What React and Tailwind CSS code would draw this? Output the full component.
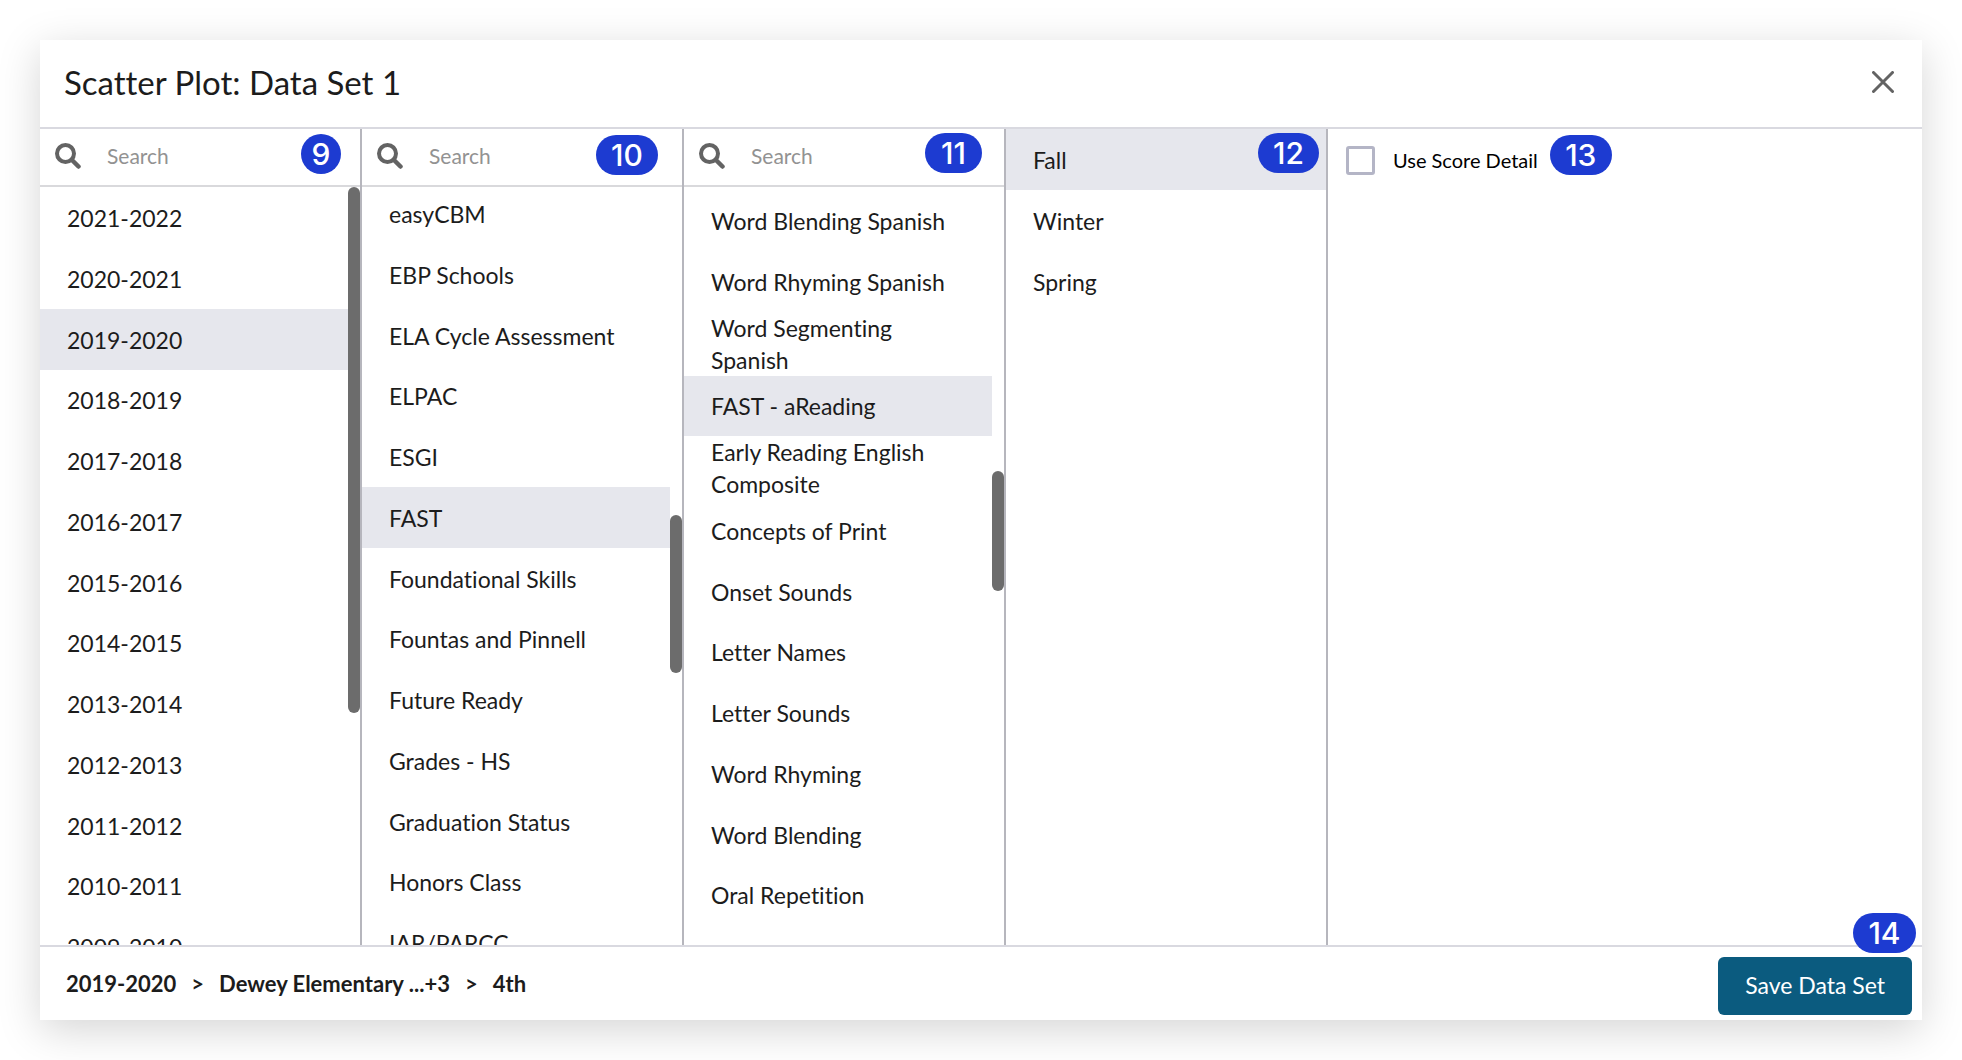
import React, { useState } from 'react';
import clsx from 'clsx';

const YEARS = [
  '2021-2022',
  '2020-2021',
  '2019-2020',
  '2018-2019',
  '2017-2018',
  '2016-2017',
  '2015-2016',
  '2014-2015',
  '2013-2014',
  '2012-2013',
  '2011-2012',
  '2010-2011',
  '2009-2010',
];

const SOURCES = [
  'easyCBM',
  'EBP Schools',
  'ELA Cycle Assessment',
  'ELPAC',
  'ESGI',
  'FAST',
  'Foundational Skills',
  'Fountas and Pinnell',
  'Future Ready',
  'Grades - HS',
  'Graduation Status',
  'Honors Class',
  'IAR/PARCC',
];

const MEASURES = [
  'Word Blending Spanish',
  'Word Rhyming Spanish',
  'Word Segmenting Spanish',
  'FAST - aReading',
  'Early Reading English Composite',
  'Concepts of Print',
  'Onset Sounds',
  'Letter Names',
  'Letter Sounds',
  'Word Rhyming',
  'Word Blending',
  'Oral Repetition',
];

const TERMS = ['Fall', 'Winter', 'Spring'];

const Badge = ({ children, className }) => (
  <span
    className={clsx(
      'absolute z-10 flex h-10 items-center justify-center rounded-full bg-[#1d3bd1] font-[Inter,sans-serif] text-[30px] font-medium leading-none text-white',
      className
    )}
  >
    {children}
  </span>
);

const SearchIcon = () => (
  <svg viewBox="0 0 26 26" className="size-[26px] shrink-0" fill="none" stroke="#636363" aria-hidden="true">
    <circle cx="10.5" cy="10.5" r="8.5" strokeWidth="4" />
    <path d="M17 17l6.5 6.5" strokeWidth="4.5" strokeLinecap="round" />
  </svg>
);

const SearchBar = ({ label }) => (
  <div className="flex h-[58px] shrink-0 items-center gap-[26px] border-b-2 border-[#d9d9dc] pb-0.5 pl-[15px]">
    <SearchIcon />
    <input
      type="text"
      aria-label={label}
      placeholder="Search"
      className="w-full min-w-0 bg-transparent text-[21px] text-[#1c1c1c] outline-none placeholder:text-[#929292]"
    />
  </div>
);

const Options = ({ items, value, onChange, className }) => (
  <ul className={className}>
    {items.map((item) => (
      <li key={item} className="flex min-h-[61px] nth-[4n]:min-h-[60px]">
        <button
          type="button"
          aria-pressed={item === value}
          onClick={() => onChange(item)}
          className={clsx(
            'w-full pl-[27px] pr-8 text-left text-[23px] leading-8',
            item === value && 'bg-[#e6e7ed]'
          )}
        >
          {item}
        </button>
      </li>
    ))}
  </ul>
);

const Column = ({ children }) => (
  <section className="relative flex w-[322px] shrink-0 flex-col border-r-2 border-[#b6b6bd]">{children}</section>
);

const Thumb = ({ className }) => (
  <span className={clsx('absolute right-0 w-3 rounded-full bg-[#6c6c6c]', className)} />
);

export default function App() {
  const [year, setYear] = useState('2019-2020');
  const [source, setSource] = useState('FAST');
  const [measure, setMeasure] = useState('FAST - aReading');
  const [term, setTerm] = useState('Fall');

  return (
    <div className="h-screen bg-white p-10 font-[Lato,sans-serif] text-[#1c1c1c] [font-variant-ligatures:none]">
      <div
        role="dialog"
        aria-labelledby="dialog-title"
        className="flex h-full flex-col bg-white shadow-[0_10px_40px_rgba(0,0,0,0.17)]"
      >
        <header className="flex h-[89px] shrink-0 items-center justify-between border-b-2 border-[#d9d9e0] pb-1 pl-6 pr-7">
          <h1 id="dialog-title" className="text-[33px] leading-10">Scatter Plot: Data Set 1</h1>
          <button type="button" aria-label="Close">
            <svg viewBox="0 0 22 22" className="size-[22px]" fill="none" stroke="#636363" strokeWidth="3" strokeLinecap="round">
              <path d="M1.5 1.5l19 19M20.5 1.5l-19 19" />
            </svg>
          </button>
        </header>

        <main className="flex min-h-0 flex-1">
          <Column>
            <SearchBar label="Search years" />
            <Badge className="right-[19px] top-[5px] w-10">9</Badge>
            <div className="relative min-h-0 flex-1 overflow-hidden pr-3">
              <Options items={YEARS} value={year} onChange={setYear} />
              <Thumb className="top-0 h-[526px]" />
            </div>
          </Column>

          <Column>
            <SearchBar label="Search sources" />
            <Badge className="right-6 top-1.5 w-[62px]">10</Badge>
            <div className="relative min-h-0 flex-1 overflow-hidden pr-3">
              <Options items={SOURCES} value={source} onChange={setSource} className="-mt-1" />
              <Thumb className="top-[328px] h-[158px]" />
            </div>
          </Column>

          <Column>
            <SearchBar label="Search measures" />
            <Badge className="right-[22px] top-1 w-[57px]">11</Badge>
            <div className="relative min-h-0 flex-1 overflow-hidden pr-3">
              <Options items={MEASURES} value={measure} onChange={setMeasure} className="pt-[3px]" />
              <Thumb className="top-[284px] h-[120px]" />
            </div>
          </Column>

          <Column>
            <Options items={TERMS} value={term} onChange={setTerm} />
            <Badge className="right-[7px] top-1 w-[61px]">12</Badge>
          </Column>

          <section className="flex-1 pl-[18px] pt-4">
            <div className="relative inline-flex">
              <label className="flex items-center gap-[18px] text-xl leading-[30px] text-black">
                <input
                  type="checkbox"
                  className="size-[29px] appearance-none rounded-[3px] border-3 border-[#b4b5c6] bg-white checked:bg-[#0b5b7f]"
                />
                Use Score Detail
              </label>
              <Badge className="-top-2.5 left-full ml-3 w-[62px]">13</Badge>
            </div>
          </section>
        </main>

        <footer className="relative flex h-[75px] shrink-0 items-center justify-between border-t-2 border-[#d9d9e0] pl-[26px] pr-2.5">
          <nav aria-label="Selection" className="flex gap-[15px] text-[22px] font-bold leading-8">
            <span>{year}</span>
            <span>&gt;</span>
            <span>Dewey Elementary ...+3</span>
            <span>&gt;</span>
            <span>4th</span>
          </nav>
          <button type="button" className="mt-1 h-[58px] rounded-md bg-[#0b5b7f] px-[27px] text-[23px] text-white">
            Save Data Set
          </button>
          <Badge className="-top-[34px] right-1.5 w-[63px]">14</Badge>
        </footer>
      </div>
    </div>
  );
}
